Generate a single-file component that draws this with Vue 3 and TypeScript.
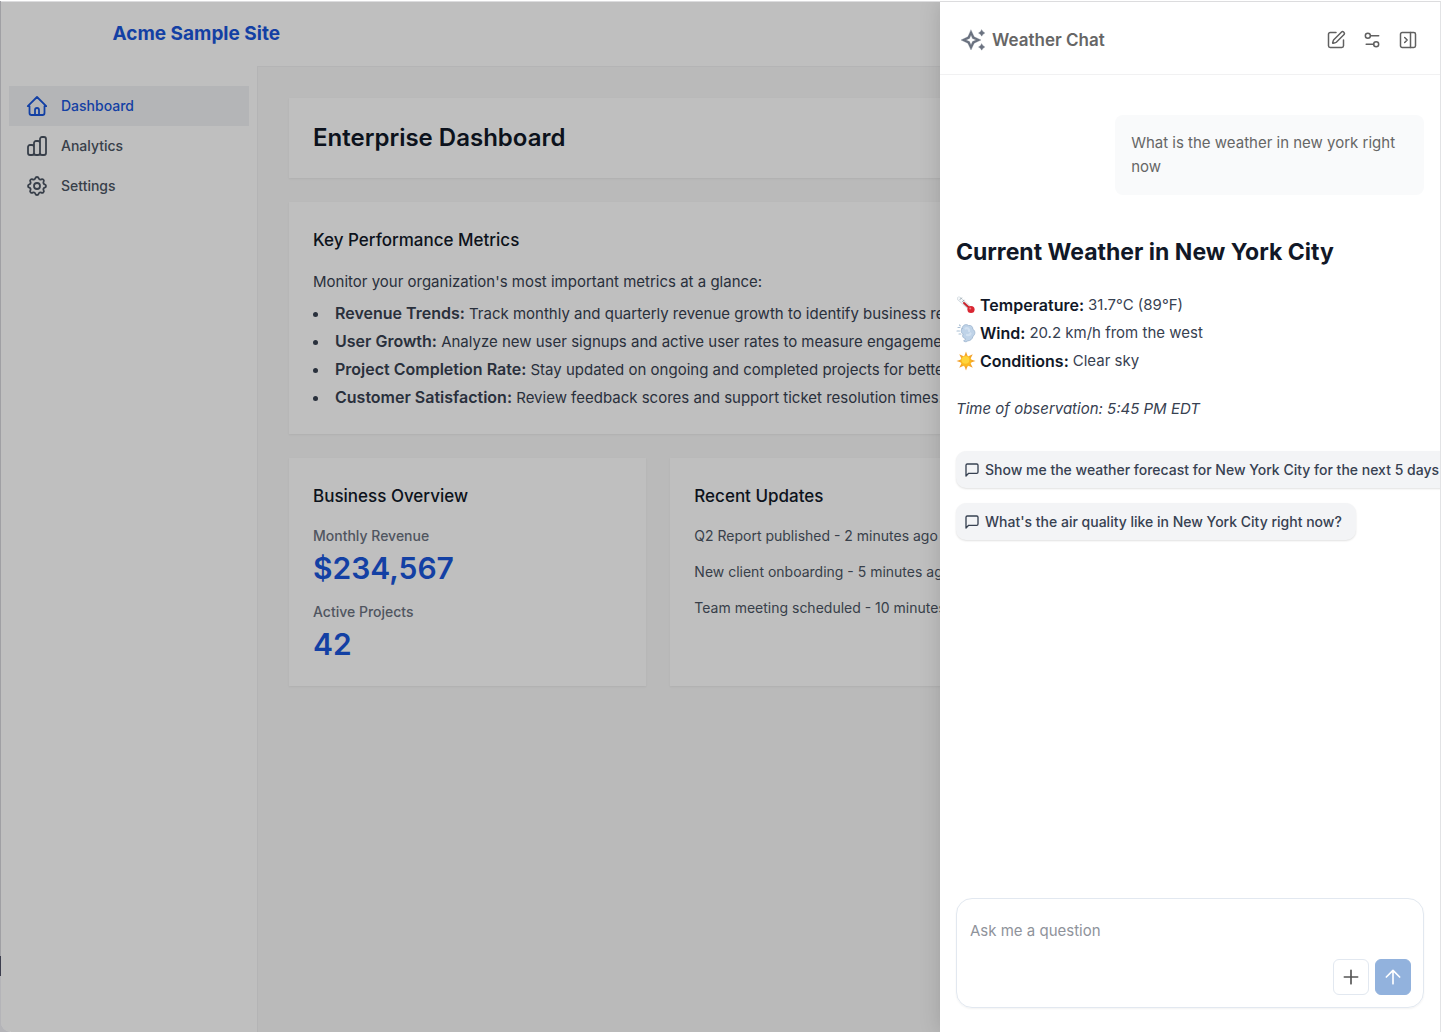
<script setup lang="ts">
import { ref } from 'vue'

interface NavItem {
  label: string
  icon: 'home' | 'chart' | 'cog'
  active: boolean
}

interface Metric {
  name: string
  text: string
}

interface Reading {
  icon: 'thermometer' | 'wind' | 'sun'
  name: string
  value: string
}

const navItems: NavItem[] = [
  { label: 'Dashboard', icon: 'home', active: true },
  { label: 'Analytics', icon: 'chart', active: false },
  { label: 'Settings', icon: 'cog', active: false },
]

const metrics: Metric[] = [
  { name: 'Revenue Trends:', text: 'Track monthly and quarterly revenue growth to identify business results.' },
  { name: 'User Growth:', text: 'Analyze new user signups and active user rates to measure engagement.' },
  { name: 'Project Completion Rate:', text: 'Stay updated on ongoing and completed projects for better planning.' },
  { name: 'Customer Satisfaction:', text: 'Review feedback scores and support ticket resolution times.' },
]

const stats = [
  { label: 'Monthly Revenue', value: '$234,567' },
  { label: 'Active Projects', value: '42' },
]

const updates: string[] = [
  'Q2 Report published - 2 minutes ago',
  'New client onboarding - 5 minutes ago',
  'Team meeting scheduled - 10 minutes ago',
]

const readings: Reading[] = [
  { icon: 'thermometer', name: 'Temperature:', value: '31.7°C (89°F)' },
  { icon: 'wind', name: 'Wind:', value: '20.2 km/h from the west' },
  { icon: 'sun', name: 'Conditions:', value: 'Clear sky' },
]

const suggestions: string[] = [
  'Show me the weather forecast for New York City for the next 5 days',
  "What's the air quality like in New York City right now?",
]

const question = ref('')
const sunRays = [0, 45, 90, 135, 180, 225, 270, 315]
</script>

<template>
  <div class="desktop">
    <div class="window">
      <header class="site-header">
        <div class="site-header-inner">
          <a href="#" class="brand">Acme Sample Site</a>
        </div>
      </header>

      <div class="body-row">
        <nav class="sidebar">
          <a
            v-for="item in navItems"
            :key="item.label"
            href="#"
            class="nav-link"
            :class="{ active: item.active }"
          >
            <svg class="nav-icon" viewBox="0 0 24 24" aria-hidden="true">
              <path
                v-if="item.icon === 'home'"
                d="M2.800 12.200h1.700v6.800a2 2 0 0 0 2 2h11a2 2 0 0 0 2-2v-6.800h1.700L12 3ZM10 21v-5a2 2 0 0 1 4 0v5"
              />
              <path
                v-else-if="item.icon === 'chart'"
                d="M9 19v-6a2 2 0 0 0-2-2H5a2 2 0 0 0-2 2v6a2 2 0 0 0 2 2h2a2 2 0 0 0 2-2zm0 0V9a2 2 0 0 1 2-2h2a2 2 0 0 1 2 2v10m-6 0a2 2 0 0 0 2 2h2a2 2 0 0 0 2-2m0 0V5a2 2 0 0 1 2-2h2a2 2 0 0 1 2 2v14a2 2 0 0 1-2 2h-2a2 2 0 0 1-2-2z"
              />
              <template v-else>
                <path
                  d="M10.325 4.317c.426-1.756 2.924-1.756 3.35 0a1.724 1.724 0 0 0 2.573 1.066c1.543-.94 3.310.826 2.370 2.370a1.724 1.724 0 0 0 1.065 2.572c1.756.426 1.756 2.924 0 3.350a1.724 1.724 0 0 0-1.066 2.573c.940 1.543-.826 3.310-2.370 2.370a1.724 1.724 0 0 0-2.572 1.065c-.426 1.756-2.924 1.756-3.350 0a1.724 1.724 0 0 0-2.573-1.066c-1.543.940-3.310-.826-2.370-2.370a1.724 1.724 0 0 0-1.065-2.572c-1.756-.426-1.756-2.924 0-3.350a1.724 1.724 0 0 0 1.066-2.573c-.940-1.543.826-3.310 2.370-2.370.996.608 2.296.070 2.572-1.065z"
                />
                <circle cx="12" cy="12" r="3" />
              </template>
            </svg>
            {{ item.label }}
          </a>
        </nav>

        <main class="main">
          <section class="card">
            <h1 class="page-title">Enterprise Dashboard</h1>
          </section>

          <section class="card">
            <h2 class="card-title">Key Performance Metrics</h2>
            <p class="intro">Monitor your organization's most important metrics at a glance:</p>
            <ul class="metrics">
              <li v-for="metric in metrics" :key="metric.name">
                <strong>{{ metric.name }}</strong> {{ metric.text }}
              </li>
            </ul>
          </section>

          <div class="card-grid">
            <section class="card">
              <h2 class="card-title">Business Overview</h2>
              <dl class="stats">
                <div v-for="stat in stats" :key="stat.label">
                  <dt>{{ stat.label }}</dt>
                  <dd>{{ stat.value }}</dd>
                </div>
              </dl>
            </section>
            <section class="card">
              <h2 class="card-title">Recent Updates</h2>
              <ul class="updates">
                <li v-for="update in updates" :key="update">{{ update }}</li>
              </ul>
            </section>
          </div>
        </main>
      </div>

      <div class="scrim"></div>

      <aside class="chat">
        <header class="chat-header">
          <svg class="sparkle" viewBox="0 0 26 24" aria-hidden="true">
            <path
              fill-rule="evenodd"
              d="M11 2 14.200 8.800 21 12 14.200 15.200 11 22 7.800 15.200 1 12 7.800 8.800ZM11 7 9.500 10.500 6 12 9.500 13.500 11 17 12.500 13.500 16 12 12.500 10.500Z"
            />
            <path d="M21.700 1.800 23 3.700 24.900 5 23 6.300 21.700 8.200 20.400 6.300 18.500 5 20.400 3.700ZM21.700 15.800 23 17.700 24.900 19 23 20.300 21.700 22.200 20.400 20.300 18.500 19 20.400 17.700Z" />
          </svg>
          <h2 class="chat-title">Weather Chat</h2>
          <div class="chat-actions">
            <button type="button" class="icon-button" aria-label="New chat">
              <svg viewBox="0 0 24 24" aria-hidden="true">
                <path d="M12 3H5a2 2 0 0 0-2 2v14a2 2 0 0 0 2 2h14a2 2 0 0 0 2-2v-7" />
                <path d="M18.375 2.625a1 1 0 0 1 3 3l-9.013 9.014a2 2 0 0 1-.853.505l-2.873.840a.5.5 0 0 1-.620-.620l.840-2.873a2 2 0 0 1 .506-.852z" />
              </svg>
            </button>
            <button type="button" class="icon-button" aria-label="Chat settings">
              <svg viewBox="0 0 24 24" aria-hidden="true">
                <path d="M20 7h-9" />
                <path d="M14 17H5" />
                <circle cx="17" cy="17" r="3" />
                <circle cx="7" cy="7" r="3" />
              </svg>
            </button>
            <button type="button" class="icon-button" aria-label="Close panel">
              <svg viewBox="0 0 24 24" aria-hidden="true">
                <rect x="3" y="3" width="18" height="18" rx="2" />
                <path d="M15 3v18" />
                <path d="m8 9 3 3-3 3" />
              </svg>
            </button>
          </div>
        </header>

        <div class="messages">
          <p class="user-message">What is the weather in new york right now</p>

          <article class="answer">
            <h3>Current Weather in New York City</h3>
            <ul class="readings">
              <li v-for="reading in readings" :key="reading.name">
                <svg v-if="reading.icon === 'thermometer'" class="emoji" viewBox="0 0 20 20" aria-hidden="true">
                  <path d="M3 3.500 14 13.500" stroke="#c9d3da" stroke-width="4" stroke-linecap="round" />
                  <path d="M3 3.500 13 12.500" stroke="#f5f8fa" stroke-width="2.800" stroke-linecap="round" />
                  <path d="M8 8 14 13.500" stroke="#c8242c" stroke-width="2" stroke-linecap="round" />
                  <path d="M5.500 3 4.200 4.400M8 5.200 6.700 6.600" stroke="#8e9aa3" stroke-width="1" />
                  <circle cx="15" cy="14.500" r="3.600" fill="#d92632" />
                  <circle cx="14.200" cy="13.500" r="1" fill="#f47b80" />
                </svg>
                <svg v-else-if="reading.icon === 'wind'" class="emoji" viewBox="0 0 20 20" aria-hidden="true">
                  <path
                    d="M6 5.500C6.500 2 10 .5 12.500 2.500c3-.5 4.500 1.500 4.300 3.700 2.800 1.500 2.600 5.500.2 7-.5 3-3 4.800-5.200 4.600-1 1.300-3.500 1.200-4.200 0 1.200-.3 1.800-1 1.800-2.200C6.500 15 6 12.500 7.300 11 5 10 4.500 7.500 6 5.500Z"
                    fill="#bfd3e8"
                    stroke="#9bb3cd"
                    stroke-width=".8"
                  />
                  <path d="M9.500 5.500c2-1 4 .5 3.500 2.500M11 12c1.500.5 3-.2 3.500-1.500" stroke="#d2e1f1" stroke-width="2.200" stroke-linecap="round" />
                  <path d="M2 4.500h2M1 8h2.500M3 11h2M3.500 2l.8.8" stroke="#aabfd4" stroke-width="1.100" stroke-linecap="round" />
                </svg>
                <svg v-else class="emoji" viewBox="0 0 20 20" aria-hidden="true">
                  <path
                    v-for="angle in sunRays"
                    :key="angle"
                    d="M10 .5 11.600 5H8.400Z"
                    fill="#f3a22c"
                    :transform="`rotate(${angle} 10 10)`"
                  />
                  <circle cx="10" cy="10" r="5.500" fill="#fbb91f" />
                  <circle cx="9.500" cy="9" r="3.800" fill="#ffd43a" />
                </svg>
                <strong>{{ reading.name }}</strong>
                <span>{{ reading.value }}</span>
              </li>
            </ul>
            <p class="observed"><em>Time of observation: 5:45 PM EDT</em></p>
          </article>

          <div class="suggestions">
            <button v-for="text in suggestions" :key="text" type="button" class="chip">
              <svg viewBox="0 0 24 24" aria-hidden="true">
                <path d="M21 15a2 2 0 0 1-2 2H7l-4 4V5a2 2 0 0 1 2-2h14a2 2 0 0 1 2 2z" />
              </svg>
              {{ text }}
            </button>
          </div>
        </div>

        <form class="composer" @submit.prevent>
          <textarea v-model="question" rows="1" aria-label="Question" placeholder="Ask me a question"></textarea>
          <div class="composer-actions">
            <button type="button" class="attach" aria-label="Add attachment">
              <svg viewBox="0 0 24 24" aria-hidden="true"><path d="M4 12h16M12 4v16" /></svg>
            </button>
            <button type="submit" class="send" aria-label="Send">
              <svg viewBox="0 0 24 24" aria-hidden="true"><path d="m4 12 8-8 8 8M12 20V4" /></svg>
            </button>
          </div>
        </form>
      </aside>
    </div>
  </div>
</template>

<style>
body {
  margin: 0;
}
</style>

<style scoped>
* {
  box-sizing: border-box;
}

h1,
h2,
h3,
p,
ul,
dl,
dd {
  margin: 0;
  padding: 0;
}

ul {
  list-style: none;
}

a {
  text-decoration: none;
}

button,
textarea {
  font: inherit;
}

strong {
  font-size: 16px;
  line-height: 20px;
  font-weight: 600;
}

svg {
  flex: none;
  display: block;
  fill: none;
  stroke: currentColor;
  stroke-linecap: round;
  stroke-linejoin: round;
}

.desktop {
  display: flex;
  min-height: 100vh;
  padding: 1px 1px 0 1px;
  background-color: #ffffff;
  background-image: linear-gradient(#a0a0a4 92.5%, #3c3e4e 92.5%, #3c3e4e 94.5%, #b4b4b8 94.5%);
  background-position: 0 1px;
  background-size: 10px 100%;
  background-repeat: no-repeat;
  font-family: Inter, "Liberation Sans", sans-serif;
  font-size: 15px;
  line-height: 24px;
  color: #374151;
}

.window {
  position: relative;
  display: flex;
  flex-direction: column;
  flex: 1;
  min-width: 0;
  overflow: hidden;
  border-top: 1px solid #dcdcde;
  border-right: 1px solid #e2e3e5;
  border-bottom-left-radius: 10px;
  background: #ffffff;
}

.site-header {
  padding: 0 32px;
}

.site-header-inner {
  display: flex;
  align-items: center;
  max-width: 1216px;
  height: 64px;
  margin: 0 auto;
}

.brand {
  font-size: 19px;
  line-height: 28px;
  font-weight: 700;
  color: #1a56db;
}

.body-row {
  display: flex;
  flex: 1;
}

.sidebar {
  flex: none;
  width: 256px;
  padding: 20px 8px;
}

.nav-link {
  display: flex;
  align-items: center;
  gap: 12px;
  height: 40px;
  padding: 0 16px;
  font-size: 14px;
  line-height: 20px;
  font-weight: 500;
  color: #4b5563;
}

.nav-link.active {
  background: #f0f2f5;
  color: #1a56db;
}

.nav-icon {
  width: 24px;
  height: 24px;
  stroke-width: 1.8;
}

.main {
  display: flex;
  flex-direction: column;
  gap: 24px;
  flex: 1;
  min-width: 0;
  padding: 31px 31px;
  border-top: 1px solid #f1f1f2;
  border-left: 1px solid #f1f1f2;
  background: #f8f8f8;
}

.card {
  padding: 24px;
  background: #ffffff;
  box-shadow: 0 1px 2px rgba(0, 0, 0, 0.06);
}

.page-title {
  font-size: 24px;
  line-height: 32px;
  font-weight: 600;
  color: #111827;
}

.card-title {
  margin-bottom: 16px;
  font-size: 17px;
  line-height: 28px;
  font-weight: 500;
  color: #111827;
}

.metrics {
  display: flex;
  flex-direction: column;
  gap: 4px;
  margin-top: 8px;
}

.metrics li::before {
  content: "";
  display: inline-block;
  width: 5px;
  height: 5px;
  margin-right: 17px;
  border-radius: 50%;
  background: currentColor;
  vertical-align: middle;
}

.card-grid {
  display: grid;
  grid-template-columns: repeat(3, 1fr);
  gap: 24px;
}

.stats {
  display: flex;
  flex-direction: column;
  gap: 16px;
}

.stats dt {
  margin-bottom: 4px;
  font-size: 14px;
  line-height: 20px;
  font-weight: 500;
  color: #6b7280;
}

.stats dd {
  font-size: 30px;
  line-height: 36px;
  font-weight: 600;
  color: #1a56db;
}

.updates {
  display: flex;
  flex-direction: column;
  gap: 16px;
  font-size: 14px;
  line-height: 20px;
  color: #4b5563;
}

.scrim {
  position: absolute;
  inset: 0;
  background: rgba(0, 0, 0, 0.25);
}

.chat {
  position: absolute;
  top: 0;
  right: 0;
  bottom: 0;
  display: flex;
  flex-direction: column;
  width: 500px;
  max-width: 100%;
  overflow: hidden;
  background: #ffffff;
  box-shadow: 0 0 20px rgba(0, 0, 0, 0.15);
}

.chat-header {
  display: flex;
  align-items: center;
  padding: 20px 14px 16px 20px;
  border-bottom: 1px solid #f1f1f2;
}

.sparkle {
  width: 26px;
  height: 24px;
  margin-right: 6px;
  fill: #6b7280;
  stroke: #6b7280;
  stroke-width: 0.3;
}

.chat-title {
  font-size: 17px;
  line-height: 28px;
  font-weight: 600;
  color: #666666;
}

.chat-actions {
  display: flex;
  margin-left: auto;
}

.icon-button {
  display: flex;
  align-items: center;
  justify-content: center;
  width: 36px;
  height: 36px;
  padding: 0;
  border: 0;
  background: none;
  color: #606060;
}

.icon-button svg {
  width: 20px;
  height: 20px;
  stroke-width: 1.8;
}

.messages {
  display: flex;
  flex-direction: column;
  flex: 1;
  padding: 40px 16px;
}

.user-message {
  align-self: flex-end;
  max-width: 66%;
  padding: 16px;
  border-radius: 8px;
  background: #f9fafb;
  color: #666666;
}

.answer {
  margin-top: 40px;
}

.answer h3 {
  font-size: 23px;
  line-height: 34px;
  font-weight: 700;
  color: #111827;
}

.readings {
  margin-top: 22px;
  line-height: 28px;
}

.readings li {
  display: flex;
  align-items: center;
  gap: 4px;
  height: 28px;
}

.readings strong {
  color: #111827;
}

.emoji {
  width: 20px;
  height: 20px;
  stroke: none;
}

.observed {
  margin-top: 20px;
  line-height: 28px;
}

.suggestions {
  display: flex;
  flex-direction: column;
  align-items: flex-start;
  gap: 15px;
  margin-top: 28px;
}

.chip {
  display: flex;
  align-items: center;
  gap: 5px;
  height: 37px;
  padding: 0 14px 0 8px;
  border: 0;
  border-radius: 10px;
  background: #f3f4f6;
  box-shadow: 0 1px 2px rgba(0, 0, 0, 0.12);
  font-size: 14px;
  line-height: 20px;
  font-weight: 450;
  white-space: nowrap;
  color: #374151;
}

.chip svg {
  width: 16px;
  height: 16px;
  stroke-width: 2;
}

.composer {
  display: flex;
  flex-direction: column;
  margin: 0 16px 24px;
  padding: 20px 12px 12px;
  border: 1px solid #e2e8f0;
  border-radius: 16px;
  box-shadow: 0 1px 2px rgba(0, 0, 0, 0.05);
}

.composer textarea {
  height: 24px;
  margin-bottom: 16px;
  padding: 0 1px;
  border: 0;
  outline: none;
  resize: none;
  overflow: hidden;
  background: none;
  color: #374151;
}

.composer textarea::placeholder {
  color: #8f939b;
}

.composer-actions {
  display: flex;
  justify-content: flex-end;
  gap: 6px;
}

.attach,
.send {
  display: flex;
  align-items: center;
  justify-content: center;
  width: 36px;
  height: 36px;
  padding: 0;
  border: 1px solid #e2e8f0;
  border-radius: 6px;
  background: #ffffff;
  color: #555555;
}

.send {
  border-color: #92b2dd;
  background: #92b2dd;
  color: #ffffff;
}

.attach svg,
.send svg {
  width: 20px;
  height: 20px;
  stroke-width: 2;
}
</style>
